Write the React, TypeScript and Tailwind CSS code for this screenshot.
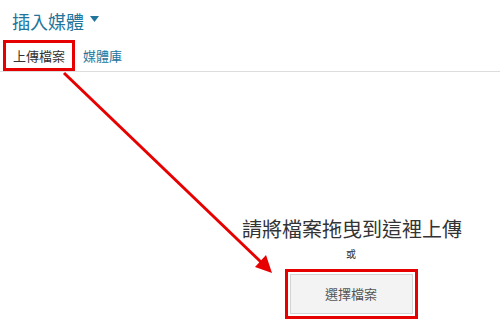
export default function App() {
  return (
    <div
      className="relative h-[329px] w-[500px] overflow-hidden bg-white"
      style={{ fontFamily: '"Noto Sans CJK TC", "Noto Sans CJK SC", sans-serif' }}
    >
      {/* header */}
      <div className="flex items-center gap-[6px] pl-[12px] pt-[10px]">
        <h1 className="text-[18px] leading-[22px] text-[#21759b]">插入媒體</h1>
        <svg width="9" height="7" viewBox="0 0 9 7" className="mb-[4px]">
          <polygon points="0,0 9,0 4.5,6" fill="#21759b" />
        </svg>
      </div>

      {/* tabs */}
      <div className="mt-[8px] flex h-[32px] items-end border-b border-[#dddddd] pl-[3px]">
        <div className="flex h-[31px] items-center border-[3px] border-[#e60000] px-[7px] text-[13px] text-[#333]">
          上傳檔案
        </div>
        <div className="flex h-[31px] items-center px-[8px] text-[13px] text-[#21759b]">媒體庫</div>
      </div>

      {/* uploader */}
      <div className="flex flex-col items-center pl-[202px] pt-[145px]">
        <p className="pl-[2px] text-[20px] leading-[24px] text-[#333]">請將檔案拖曳到這裡上傳</p>
        <p className="mt-[7px] text-[10px] leading-[12px] text-[#333]">或</p>
        <div className="mt-[9px] border-[3px] border-[#e60000] p-[2px]">
          <div className="flex h-[40px] w-[123px] items-center justify-center border border-[#d4d4d4] bg-[#f3f3f3] text-[13px] text-[#555]">
            選擇檔案
          </div>
        </div>
      </div>

      {/* annotation arrow */}
      <svg className="pointer-events-none absolute left-0 top-0" width="500" height="329">
        <line x1="64" y1="73" x2="262" y2="263" stroke="#e60000" strokeWidth="3" />
        <polygon points="272,273 255,267 266,255" fill="#e60000" />
      </svg>
    </div>
  );
}
